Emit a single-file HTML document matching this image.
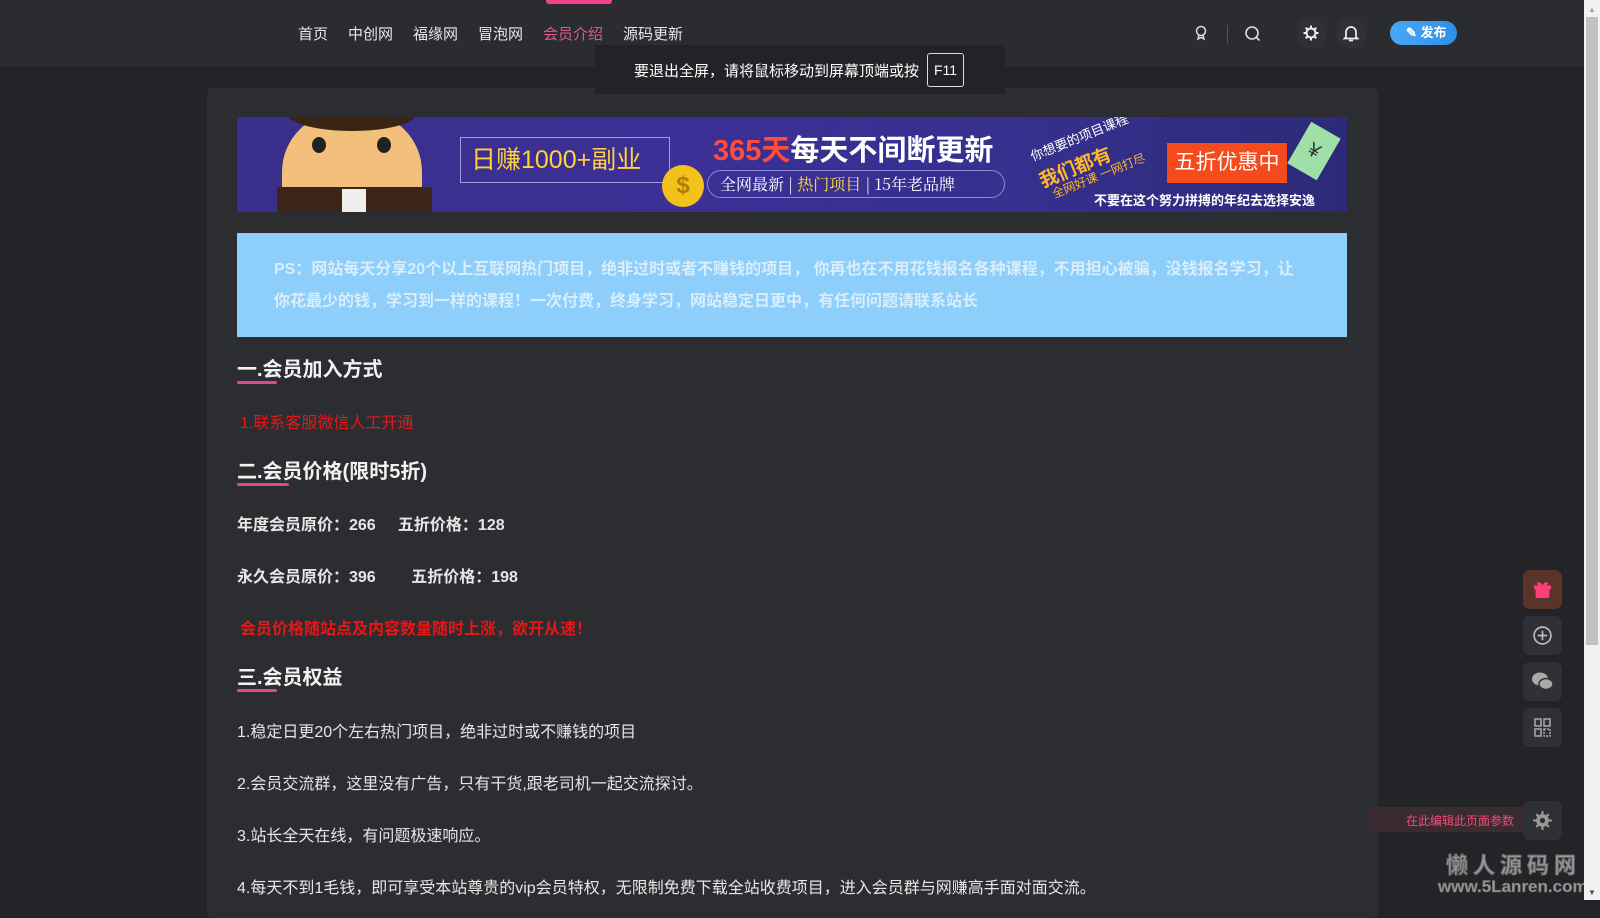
<!DOCTYPE html>
<html><head><meta charset="utf-8"><style>
*{margin:0;padding:0;box-sizing:border-box}
body{width:1600px;height:900px;overflow:hidden;background:#232427;font-family:"Liberation Sans","Noto Sans CJK SC",sans-serif;color:#e6e6e6;position:relative}
.hdr{position:absolute;left:0;top:0;width:1584px;height:67px;background:#2b2c30}
.tab{position:absolute;left:546px;top:0;width:66px;height:4px;background:#f3418c;border-radius:0 0 3px 3px}
.nav{position:absolute;top:23px;font-size:15px;color:#e8e8e8;white-space:nowrap}
.ic{position:absolute}
.fs{position:absolute;left:595px;top:45px;width:410px;height:49px;background:#222327;z-index:5;color:#fff;font-size:15px}
.card{position:absolute;left:207px;top:88px;width:1171px;height:830px;background:#2c2d31;border-radius:6px}
.a{position:absolute;white-space:nowrap}
.h{font-size:20px;font-weight:bold;color:#f2f2f2}
.ul{position:absolute;height:3px;background:#e0478c;border-radius:2px;width:40px}
.t{font-size:16px;color:#e6e6e6}
.b{font-weight:bold}
.r{color:#e81616;font-size:16px}
.fb{position:absolute;left:1523px;width:39px;height:39px;border-radius:7px;background:#303136}
</style></head><body>
<div class="hdr"></div>
<div class="tab"></div>
<div class="nav" style="left:298px">首页</div>
<div class="nav" style="left:348px">中创网</div>
<div class="nav" style="left:413px">福缘网</div>
<div class="nav" style="left:478px">冒泡网</div>
<div class="nav" style="left:543px;color:#e0589a">会员介绍</div>
<div class="nav" style="left:623px">源码更新</div>
<svg class="ic" style="left:1193px;top:25px" width="16" height="16" viewBox="0 0 16 16" fill="none" stroke="#ddd" stroke-width="1.5"><circle cx="8" cy="6" r="4.5"/><path d="M6 10l-1 4 3-1.5 3 1.5-1-4"/></svg>
<div class="ic" style="left:1227px;top:25px;width:1px;height:18px;background:#555"></div>
<svg class="ic" style="left:1244px;top:25px" width="17" height="17" viewBox="0 0 17 17" fill="none" stroke="#ddd" stroke-width="1.6"><circle cx="8" cy="8" r="6"/><path d="M12.5 12.5l3 3"/></svg>
<div class="ic" style="left:1296px;top:18px;width:30px;height:30px;border-radius:50%;background:#303136"></div>
<svg class="ic" style="left:1302px;top:24px" width="18" height="18" viewBox="0 0 18 18" fill="none" stroke="#eee" stroke-width="2"><circle cx="9" cy="9" r="4.5"/><path d="M9 1.5v2.5M9 14v2.5M1.5 9H4M14 9h2.5M3.7 3.7l1.8 1.8M12.5 12.5l1.8 1.8M3.7 14.3l1.8-1.8M12.5 5.5l1.8-1.8"/></svg>
<div class="ic" style="left:1336px;top:18px;width:30px;height:30px;border-radius:50%;background:#303136"></div>
<svg class="ic" style="left:1342px;top:24px" width="18" height="18" viewBox="0 0 18 18" fill="none" stroke="#eee" stroke-width="1.7"><path d="M4 13V8a5 5 0 0 1 10 0v5l1.5 1.5h-13z M7 16.5h4"/></svg>
<div class="ic" style="left:1390px;top:21px;width:67px;height:24px;border-radius:12px;background:linear-gradient(90deg,#4aa8f5,#2f8fe8);color:#fff;font-size:13px;font-weight:bold;line-height:24px;padding-left:16px">✎ 发布</div>
<div class="fs"><span class="a" style="left:39px;top:15px">要退出全屏，请将鼠标移动到屏幕顶端或按</span><span class="a" style="left:332px;top:8px;width:37px;height:34px;border:1px solid #ddd;border-radius:3px;text-align:center;line-height:32px;font-size:14px">F11</span></div>
<div class="card"></div>
<!-- banner -->
<div class="a" style="left:237px;top:117px;width:1110px;height:95px;background:linear-gradient(90deg,#3a2f8a,#3c2f96 40%,#36308e 70%,#2c2a78);overflow:hidden">
 <div class="a" style="left:45px;top:-5px;width:140px;height:105px;border-radius:60px 60px 30px 30px;background:#f2c07a"></div>
 <div class="a" style="left:50px;top:-22px;width:130px;height:36px;background:#3a2414;border-radius:50%"></div>
 <div class="a" style="left:75px;top:20px;width:14px;height:16px;border-radius:50%;background:#222"></div>
 <div class="a" style="left:140px;top:20px;width:14px;height:16px;border-radius:50%;background:#222"></div>
 <div class="a" style="left:40px;top:70px;width:155px;height:30px;background:#3b2618"></div>
 <div class="a" style="left:105px;top:72px;width:24px;height:30px;background:#eee"></div>
 <div class="a" style="left:223px;top:20px;width:210px;height:46px;border:1px solid #9aa0e0;color:#ffd23a;font-size:25px;line-height:44px;padding-left:10px">日赚1000+副业</div>
 <div class="a" style="left:425px;top:48px;width:42px;height:42px;border-radius:50%;background:#f3c21a;color:#b07d00;font-size:24px;text-align:center;line-height:42px;font-weight:bold">$</div>
 <div class="a" style="left:476px;top:10px;font-size:29px;font-weight:bold;color:#fff"><span style="color:#ff4c3b">365天</span>每天不间断更新</div>
 <div class="a" style="left:470px;top:53px;width:298px;height:28px;border:1px solid #8a8ad8;border-radius:14px;font-size:16px;line-height:26px;padding-left:12px;color:#fff;font-family:'Noto Serif CJK SC',serif">全网最新 | <span style="color:#ffe040">热门项目</span> | 15年老品牌</div>
 <div class="a" style="left:790px;top:10px;font-size:13px;color:#fff;transform:rotate(-22deg)">你想要的项目课程</div>
 <div class="a" style="left:800px;top:36px;font-size:19px;color:#ffb52e;font-weight:bold;transform:rotate(-22deg)">我们都有</div>
 <div class="a" style="left:812px;top:50px;font-size:12px;color:#ffb52e;transform:rotate(-22deg)">全网好课 一网打尽</div>
 <div class="a" style="left:930px;top:26px;width:120px;height:40px;background:#f54a1c;color:#fff;font-size:21px;text-align:center;line-height:40px">五折优惠中</div>
 <div class="a" style="left:1060px;top:10px;width:34px;height:48px;background:#9fe0a8;transform:rotate(30deg);color:#333;text-align:center;line-height:48px;font-size:20px">¥</div>
 <div class="a" style="left:857px;top:73px;font-size:13px;color:#fff;font-weight:bold">不要在这个努力拼搏的年纪去选择安逸</div>
</div>
<div class="a" style="left:237px;top:233px;width:1110px;height:104px;background:#8dcffa"></div>
<div class="a b" style="left:274px;top:255px;font-size:16px;color:#d9eefc">PS：网站每天分享20个以上互联网热门项目，绝非过时或者不赚钱的项目， 你再也在不用花钱报名各种课程，不用担心被骗，没钱报名学习，让</div>
<div class="a b" style="left:274px;top:287px;font-size:16px;color:#d9eefc">你花最少的钱，学习到一样的课程！一次付费，终身学习，网站稳定日更中，有任何问题请联系站长</div>
<div class="a h" style="left:237px;top:353px">一.会员加入方式</div><div class="ul" style="left:237px;top:381px"></div>
<div class="a r" style="left:240px;top:409px">1.联系客服微信人工开通</div>
<div class="a h" style="left:237px;top:455px">二.会员价格(限时5折)</div><div class="ul" style="left:237px;top:483px;width:52px"></div>
<div class="a t b" style="left:237px;top:511px">年度会员原价：266&nbsp;&nbsp;&nbsp;&nbsp;&nbsp;五折价格：128</div>
<div class="a t b" style="left:237px;top:563px">永久会员原价：396&nbsp;&nbsp;&nbsp;&nbsp;&nbsp;&nbsp;&nbsp;&nbsp;五折价格：198</div>
<div class="a r b" style="left:240px;top:615px">会员价格随站点及内容数量随时上涨，欲开从速！</div>
<div class="a h" style="left:237px;top:661px">三.会员权益</div><div class="ul" style="left:237px;top:689px"></div>
<div class="a t" style="left:237px;top:718px">1.稳定日更20个左右热门项目，绝非过时或不赚钱的项目</div>
<div class="a t" style="left:237px;top:770px">2.会员交流群，这里没有广告，只有干货,跟老司机一起交流探讨。</div>
<div class="a t" style="left:237px;top:822px">3.站长全天在线，有问题极速响应。</div>
<div class="a t" style="left:237px;top:874px">4.每天不到1毛钱，即可享受本站尊贵的vip会员特权，无限制免费下载全站收费项目，进入会员群与网赚高手面对面交流。</div>
<!-- floating -->
<div class="fb" style="top:570px;background:#5a3428"></div>
<svg class="ic" style="left:1532px;top:579px" width="21" height="21" viewBox="0 0 20 20" fill="#ff3f7a"><rect x="2" y="6" width="16" height="4"/><rect x="3.5" y="10" width="13" height="8"/><path d="M10 6C7 1 3 3 6 6zM10 6c3-5 7-3 4 0z"/></svg>
<div class="fb" style="top:616px"></div>
<svg class="ic" style="left:1532px;top:625px" width="21" height="21" viewBox="0 0 20 20" fill="none" stroke="#bbb" stroke-width="1.6"><circle cx="10" cy="10" r="8"/><path d="M10 5.5v9M5.5 10h9"/></svg>
<div class="fb" style="top:662px"></div>
<svg class="ic" style="left:1531px;top:671px" width="23" height="21" viewBox="0 0 23 21" fill="#aaa"><ellipse cx="9" cy="8" rx="8" ry="6.5"/><ellipse cx="15" cy="13" rx="7" ry="5.5" stroke="#303136" stroke-width="1.5"/></svg>
<div class="fb" style="top:708px"></div>
<svg class="ic" style="left:1534px;top:718px" width="17" height="19" viewBox="0 0 17 19" fill="none" stroke="#aaa" stroke-width="1.5"><rect x="1" y="1" width="6" height="7"/><rect x="10" y="1" width="6" height="7"/><rect x="1" y="11" width="6" height="7"/><path d="M10 11h6v7h-6z" stroke-dasharray="2 1"/></svg>
<div class="a" style="left:1367px;top:807px;width:156px;height:25px;background:#3f2b33;opacity:.85"></div>
<div class="a" style="left:1406px;top:812px;font-size:12px;color:#ee4f7a">在此编辑此页面参数</div>
<div class="fb" style="top:801px;background:#2f3034"></div>
<svg class="ic" style="left:1533px;top:811px" width="19" height="19" viewBox="0 0 18 18" fill="#999"><circle cx="9" cy="9" r="6"/><path d="M8 0h2v4H8zM8 14h2v4H8zM0 8h4v2H0zM14 8h4v2h-4zM2.3 3.7l1.4-1.4 2.8 2.8-1.4 1.4zM11.5 12.9l1.4-1.4 2.8 2.8-1.4 1.4zM2.3 14.3l2.8-2.8 1.4 1.4-2.8 2.8zM11.5 5.1l2.8-2.8 1.4 1.4-2.8 2.8z"/><circle cx="9" cy="9" r="2.5" fill="#2f3034"/></svg>
<div class="a" style="left:1446px;top:848px;font-size:22px;font-weight:bold;color:#999;letter-spacing:5px;-webkit-text-stroke:1px #666">懒人源码网</div>
<div class="a" style="left:1438px;top:877px;font-size:17px;font-weight:bold;color:#999;-webkit-text-stroke:.6px #666">www.5Lanren.com</div>
<!-- scrollbar -->
<div class="a" style="left:1584px;top:0;width:16px;height:900px;background:#f1f1f1"></div>
<div class="a" style="left:1586px;top:17px;width:12px;height:628px;background:#c1c1c1"></div>
<div class="a" style="left:1588px;top:5px;font-size:8px;color:#a3a3a3">▲</div>
<div class="a" style="left:1588px;top:888px;font-size:8px;color:#505050">▼</div>
</body></html>
